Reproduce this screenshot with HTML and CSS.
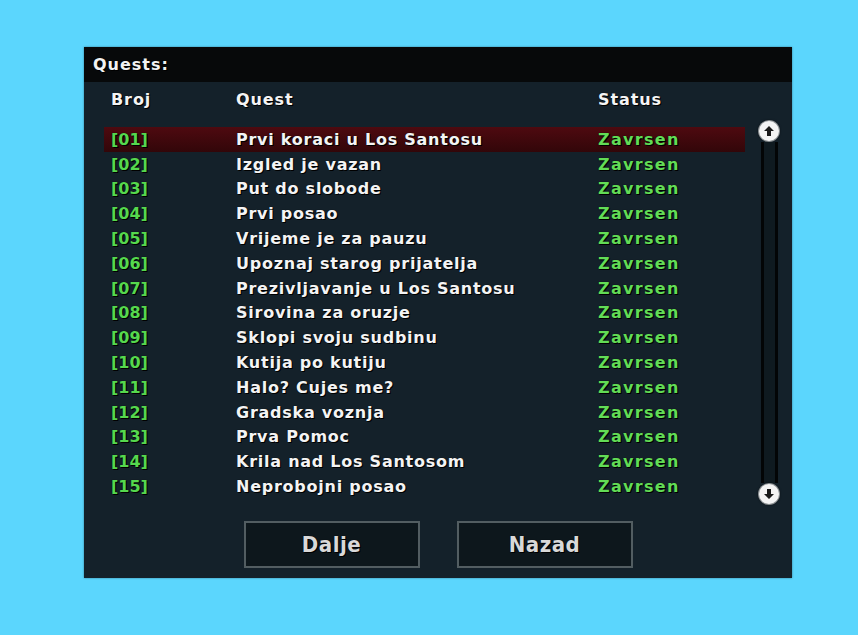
FILE: index.html
```html
<!DOCTYPE html>
<html>
<head>
<meta charset="utf-8">
<link rel="stylesheet" href="styles.css">
</head>
<body>
<div class="panel">
  <div class="titlebar">Quests:</div>
  <div class="header">
    <span class="c-num">Broj</span>
    <span class="c-name">Quest</span>
    <span class="c-status">Status</span>
  </div>
  <div class="body">
    <div class="list">
      <div class="row active"><span class="c-num num">[01]</span><span class="c-name">Prvi koraci u Los Santosu</span><span class="c-status st">Zavrsen</span></div>
      <div class="row"><span class="c-num num">[02]</span><span class="c-name">Izgled je vazan</span><span class="c-status st">Zavrsen</span></div>
      <div class="row"><span class="c-num num">[03]</span><span class="c-name">Put do slobode</span><span class="c-status st">Zavrsen</span></div>
      <div class="row"><span class="c-num num">[04]</span><span class="c-name">Prvi posao</span><span class="c-status st">Zavrsen</span></div>
      <div class="row"><span class="c-num num">[05]</span><span class="c-name">Vrijeme je za pauzu</span><span class="c-status st">Zavrsen</span></div>
      <div class="row"><span class="c-num num">[06]</span><span class="c-name">Upoznaj starog prijatelja</span><span class="c-status st">Zavrsen</span></div>
      <div class="row"><span class="c-num num">[07]</span><span class="c-name">Prezivljavanje u Los Santosu</span><span class="c-status st">Zavrsen</span></div>
      <div class="row"><span class="c-num num">[08]</span><span class="c-name">Sirovina za oruzje</span><span class="c-status st">Zavrsen</span></div>
      <div class="row"><span class="c-num num">[09]</span><span class="c-name">Sklopi svoju sudbinu</span><span class="c-status st">Zavrsen</span></div>
      <div class="row"><span class="c-num num">[10]</span><span class="c-name">Kutija po kutiju</span><span class="c-status st">Zavrsen</span></div>
      <div class="row"><span class="c-num num">[11]</span><span class="c-name">Halo? Cujes me?</span><span class="c-status st">Zavrsen</span></div>
      <div class="row"><span class="c-num num">[12]</span><span class="c-name">Gradska voznja</span><span class="c-status st">Zavrsen</span></div>
      <div class="row"><span class="c-num num">[13]</span><span class="c-name">Prva Pomoc</span><span class="c-status st">Zavrsen</span></div>
      <div class="row"><span class="c-num num">[14]</span><span class="c-name">Krila nad Los Santosom</span><span class="c-status st">Zavrsen</span></div>
      <div class="row"><span class="c-num num">[15]</span><span class="c-name">Neprobojni posao</span><span class="c-status st">Zavrsen</span></div>
    </div>
    <div class="scroll">
      <div class="knob">
        <svg width="12" height="12" viewBox="0 0 12 12"><path d="M6 1 L11 6 L8 6 L8 11 L4 11 L4 6 L1 6 Z" fill="#1a1a1a"/></svg>
      </div>
      <div class="track"></div>
      <div class="knob">
        <svg width="12" height="12" viewBox="0 0 12 12"><path d="M6 11 L11 6 L8 6 L8 1 L4 1 L4 6 L1 6 Z" fill="#1a1a1a"/></svg>
      </div>
    </div>
  </div>
  <div class="footer">
    <button class="btn">Dalje</button>
    <button class="btn">Nazad</button>
  </div>
</div>
</body>
</html>
```
FILE: styles.css
```css
html, body {
  margin: 0;
  padding: 0;
}
body {
  background: #5bd6fd;
  width: 858px;
  height: 635px;
  overflow: hidden;
  font-family: "DejaVu Sans", "Liberation Sans", sans-serif;
  font-weight: bold;
}
.panel {
  margin: 47px 0 0 84px;
  width: 708px;
  height: 531px;
  background: #14212a;
  display: flex;
  flex-direction: column;
  box-shadow: 0 0 2px rgba(0,0,0,0.4);
}
.titlebar {
  height: 35px;
  background: #07090a;
  color: #f2f2f2;
  font-size: 16px;
  line-height: 35px;
  padding-left: 9px;
  letter-spacing: 1px;
  text-shadow: 0 0 1px #000, 1px 1px 0 #000;
}
.header {
  height: 39px;
  display: grid;
  grid-template-columns: 125px 362px 1fr;
  padding-left: 27px;
  align-items: start;
  padding-top: 8px;
  box-sizing: border-box;
  color: #f4f4f4;
  font-size: 16px;
  line-height: 20px;
  letter-spacing: 0.9px;
  text-shadow: 0 0 1px #000, 1px 1px 0 #000;
}
.body {
  display: flex;
  padding-left: 20px;
  gap: 12px;
}
.list {
  width: 641px;
  padding-top: 6px;
}
.row {
  height: 24.8px;
  display: grid;
  grid-template-columns: 125px 362px 1fr;
  align-items: center;
  padding-left: 7px;
  font-size: 16px;
  letter-spacing: 0.75px;
  color: #f4f4f4;
  text-shadow: 0 0 1px #000, 1px 1px 0 #000;
}
.row.active {
  background: linear-gradient(to bottom, #4e0a10, #320609);
}
.num {
  color: #56d84e;
  letter-spacing: 0;
}
.st {
  color: #62dc56;
  letter-spacing: 1.3px;
}
.scroll {
  width: 24px;
  height: 383px;
  display: flex;
  flex-direction: column;
  align-items: center;
}
.knob {
  width: 20px;
  height: 20px;
  border-radius: 50%;
  background: #f4f4f4;
  box-shadow: 0 0 0 1px #8a8f92, 0 0 2px 1px rgba(0,0,0,0.5);
  display: flex;
  align-items: center;
  justify-content: center;
  flex: none;
}
.track {
  flex: 1;
  width: 11px;
  border-left: 3px solid #030506;
  border-right: 3px solid #030506;
  background: #0f1a20;
  margin: 1px 0;
}
.footer {
  display: flex;
  justify-content: center;
  gap: 37px;
  padding-top: 17px;
}
.btn {
  width: 176px;
  height: 47px;
  background: #0d171c;
  border: 2px solid #525d61;
  color: #d9d9d9;
  font-family: "DejaVu Sans Condensed", "DejaVu Sans", sans-serif;
  font-stretch: condensed;
  font-weight: bold;
  font-size: 22px;
  letter-spacing: 0.5px;
  text-shadow: 0 0 1px #000, 1px 1px 0 #000;
  padding: 0;
}
```
